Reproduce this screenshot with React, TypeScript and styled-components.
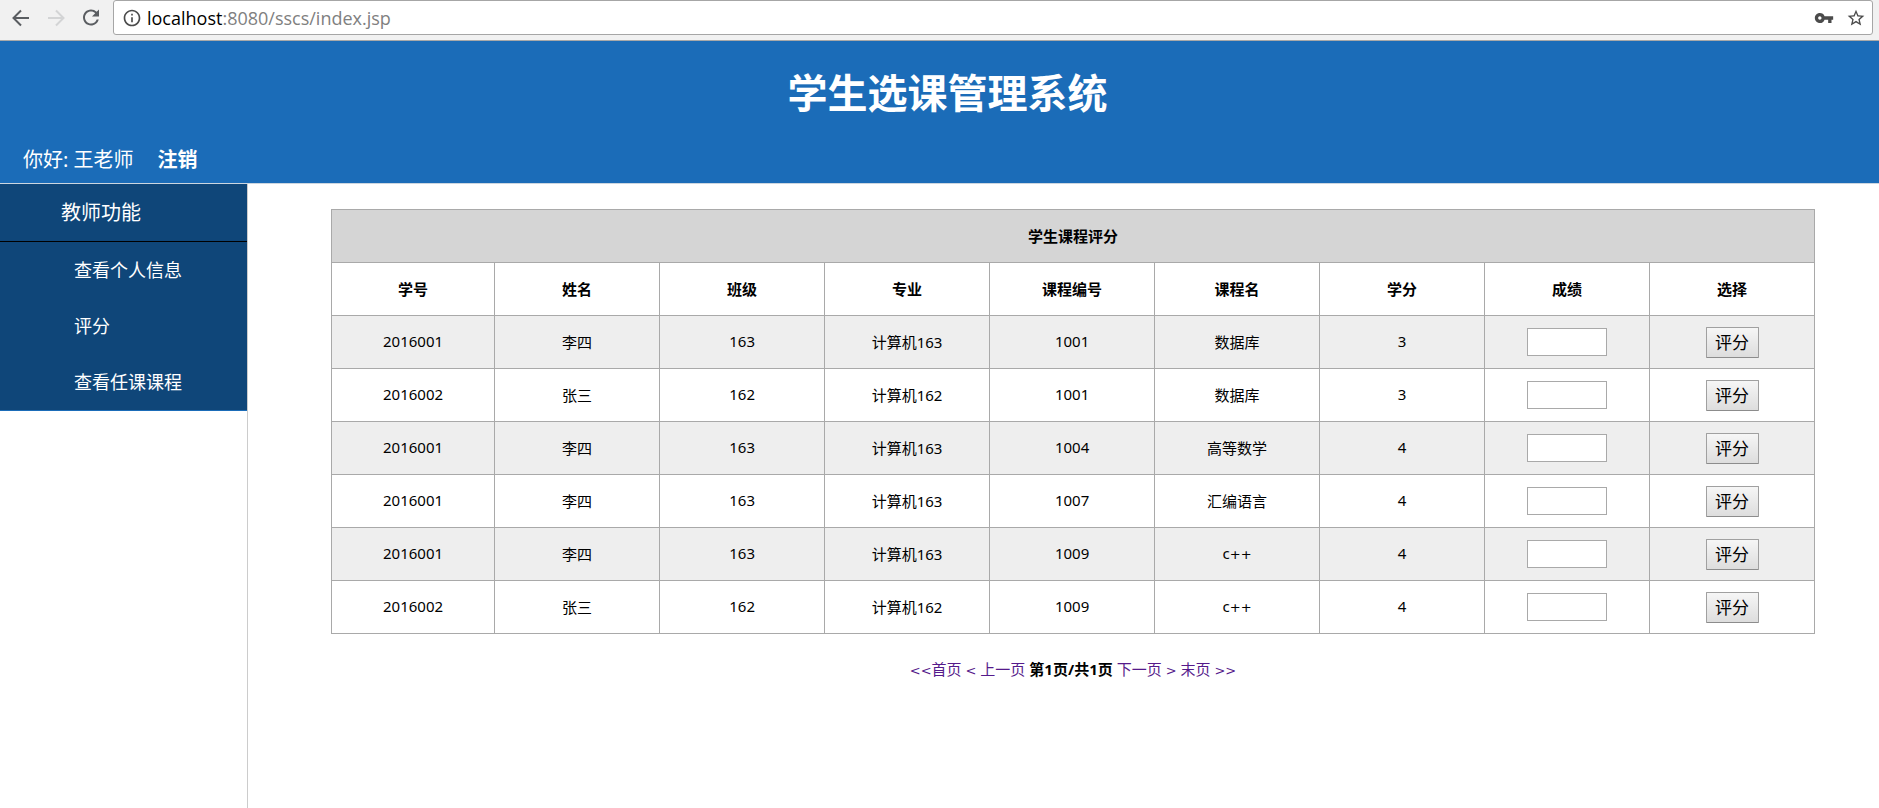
import React from "react";
import styled, { createGlobalStyle } from "styled-components";
import { MdInfoOutline, MdRefresh, MdStarBorder, MdVpnKey } from "react-icons/md";

const GlobalStyle = createGlobalStyle`
  * { box-sizing: border-box; }
  body {
    margin: 0;
    background: #fff;
    color: #000;
    font-family: "Noto Sans", "Noto Sans CJK SC", sans-serif;
    font-size: 15px;
  }
`;

const Page = styled.div`
  display: flex;
  flex-direction: column;
  min-height: 100vh;
`;

const BrowserBar = styled.div`
  display: flex;
  align-items: flex-start;
  height: 41px;
  padding: 0 6px 0 9px;
  background: #f1f1f1;
  border-bottom: 1px solid #a9a9a9;
`;

const NavButton = styled.button`
  display: flex;
  align-items: center;
  justify-content: center;
  width: 24px;
  height: 35px;
  margin-right: 11px;
  padding: 0;
  border: 0;
  background: none;
  color: #5a5d61;

  &:disabled { color: #d3d4d5; }
`;

const AddressBar = styled.div`
  display: flex;
  flex: 1;
  align-items: center;
  height: 35px;
  margin-left: -1px;
  padding: 0 6px 0 8px;
  border: 1px solid #a6a6a6;
  border-radius: 3px;
  background: #fff;
  color: #4b4b4b;
`;

const Url = styled.span`
  flex: 1;
  margin-left: 5px;
  color: #808080;
  font-family: "Open Sans", sans-serif;
  font-size: 18px;
  line-height: 32px;
`;

const Host = styled.span`
  color: #000;
`;

const BarButton = styled.button`
  display: flex;
  margin-left: 12px;
  padding: 0;
  border: 0;
  background: none;
  color: inherit;
`;

const Header = styled.header`
  display: flex;
  flex-direction: column;
  justify-content: space-between;
  height: 143px;
  padding: 22px 0 7px;
  background: #1b6cb8;
  border-bottom: 1px solid #ccd6e0;
  color: #fff;
`;

const Title = styled.h1`
  margin: 0;
  padding-left: 16px;
  font-size: 40px;
  line-height: 60px;
  text-align: center;
`;

const Greeting = styled.div`
  display: flex;
  gap: 24px;
  padding-left: 23px;
  font-size: 20px;
  line-height: 32px;
`;

const Logout = styled.a`
  color: #fff;
  font-weight: 700;
  text-decoration: none;
`;

const Body = styled.div`
  display: flex;
  flex: 1;
`;

const Sidebar = styled.aside`
  flex: none;
  width: 248px;
  border-right: 1px solid #ccc;
`;

const Menu = styled.nav`
  background: #0f4679;
  border-bottom: 1px solid #1b6cb8;
`;

const MenuTitle = styled.h2`
  margin: 0;
  padding-left: 61px;
  border-bottom: 1px solid #000;
  color: #fff;
  font-size: 20px;
  font-weight: 400;
  line-height: 57px;
`;

const MenuLink = styled.a`
  display: block;
  padding-left: 74px;
  color: #fff;
  font-size: 18px;
  line-height: 56px;
  text-decoration: none;
`;

const Content = styled.main`
  flex: 1;
  padding: 25px 64px 0 83px;
`;

const ScoreTable = styled.table`
  width: 100%;
  table-layout: fixed;
  border-collapse: collapse;
`;

const NumberColumn = styled.col`
  width: 11%;
`;

const Row = styled.tr<{ $shade?: string }>`
  height: 53px;
  background: ${(p) => p.$shade ?? "#fff"};
`;

const HeadCell = styled.th`
  padding: 0 0 2px;
  border: 1px solid #a9a9a9;
`;

const Cell = styled.td`
  padding: 0 0 2px;
  border: 1px solid #a9a9a9;
  text-align: center;
`;

const ControlCell = styled(Cell)`
  padding: 0;
`;

const ScoreInput = styled.input`
  display: block;
  width: 80px;
  height: 28px;
  margin: 0 auto;
  padding: 1px 4px;
  border: 1px solid #a9a9a9;
  background: #fff;
  font: inherit;
`;

const ScoreButton = styled.button`
  display: block;
  width: 53px;
  height: 31px;
  margin: 0 auto;
  padding: 0;
  border: 1px solid #a0a0a0;
  border-bottom-color: #8c8c8c;
  border-radius: 1px;
  background: linear-gradient(#f6f6f6, #dddddd);
  color: #000;
  font-family: inherit;
  font-size: 17px;
  line-height: 29px;
`;

const Pager = styled.nav`
  display: flex;
  justify-content: center;
  gap: 4px;
  margin-top: 23px;
  line-height: 24px;
`;

const PageLink = styled.a`
  color: #551a8b;
  text-decoration: none;
`;

const Sign = styled.span`
  font-family: "DejaVu Sans", sans-serif;
  font-size: 13px;
`;

const menu = ["查看个人信息", "评分", "查看任课课程"];
const columns = ["学号", "姓名", "班级", "专业", "课程编号", "课程名", "学分", "成绩", "选择"];
const rows = [
  ["2016001", "李四", "163", "计算机163", "1001", "数据库", "3"],
  ["2016002", "张三", "162", "计算机162", "1001", "数据库", "3"],
  ["2016001", "李四", "163", "计算机163", "1004", "高等数学", "4"],
  ["2016001", "李四", "163", "计算机163", "1007", "汇编语言", "4"],
  ["2016001", "李四", "163", "计算机163", "1009", "c++", "4"],
  ["2016002", "张三", "162", "计算机162", "1009", "c++", "4"],
];

const Arrow = ({ forward = false }: { forward?: boolean }) => (
  <svg width="18" height="18" viewBox="0 0 18 18" fill="none" stroke="currentColor" strokeWidth="2">
    <path d={forward ? "M1 9h15M9 1.5 16.5 9 9 16.5" : "M17 9H2M9 1.5 1.5 9 9 16.5"} />
  </svg>
);

export default function App() {
  return (
    <Page lang="zh-CN">
      <GlobalStyle />
      <BrowserBar>
        <NavButton aria-label="后退"><Arrow /></NavButton>
        <NavButton aria-label="前进" disabled><Arrow forward /></NavButton>
        <NavButton aria-label="刷新"><MdRefresh size={25} /></NavButton>
        <AddressBar>
          <MdInfoOutline size={20} />
          <Url><Host>localhost</Host>:8080/sscs/index.jsp</Url>
          <BarButton aria-label="密码"><MdVpnKey size={20} /></BarButton>
          <BarButton aria-label="收藏"><MdStarBorder size={20} /></BarButton>
        </AddressBar>
      </BrowserBar>
      <Header>
        <Title>学生选课管理系统</Title>
        <Greeting>
          <span>你好: 王老师</span>
          <Logout href="#logout">注销</Logout>
        </Greeting>
      </Header>
      <Body>
        <Sidebar>
          <Menu>
            <MenuTitle>教师功能</MenuTitle>
            {menu.map((item) => (
              <MenuLink key={item} href="#menu">{item}</MenuLink>
            ))}
          </Menu>
        </Sidebar>
        <Content>
          <ScoreTable>
            <colgroup>
              <NumberColumn />
              <col span={columns.length - 1} />
            </colgroup>
            <thead>
              <Row $shade="#d5d5d5">
                <HeadCell colSpan={columns.length}>学生课程评分</HeadCell>
              </Row>
              <Row>
                {columns.map((c) => <HeadCell key={c} scope="col">{c}</HeadCell>)}
              </Row>
            </thead>
            <tbody>
              {rows.map((row, i) => (
                <Row key={i} $shade={i % 2 === 0 ? "#eeeeee" : undefined}>
                  {row.map((value, j) => (
                    <Cell key={j}>{value === "c++" ? <>c<Sign>++</Sign></> : value}</Cell>
                  ))}
                  <ControlCell><ScoreInput type="text" aria-label={`成绩 ${row[0]} ${row[5]}`} /></ControlCell>
                  <ControlCell><ScoreButton type="button">评分</ScoreButton></ControlCell>
                </Row>
              ))}
            </tbody>
          </ScoreTable>
          <Pager aria-label="分页">
            <PageLink href="#first"><Sign>&lt;&lt;</Sign>首页</PageLink>
            <PageLink href="#prev"><Sign>&lt;</Sign> 上一页</PageLink>
            <strong>第1页/共1页</strong>
            <PageLink href="#next">下一页 <Sign>&gt;</Sign></PageLink>
            <PageLink href="#last">末页 <Sign>&gt;&gt;</Sign></PageLink>
          </Pager>
        </Content>
      </Body>
    </Page>
  );
}
